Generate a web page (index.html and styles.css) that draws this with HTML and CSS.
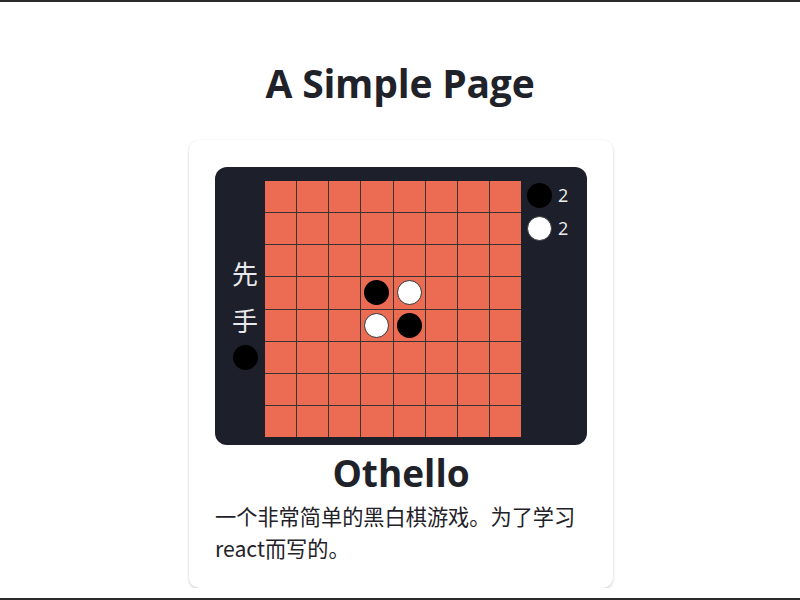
FILE: index.html
```html
<!DOCTYPE html>
<html lang="zh">
<head>
<meta charset="utf-8">
<title>A Simple Page</title>
<link rel="stylesheet" href="styles.css">
</head>
<body>
<div class="frame-bottom"></div>
<main class="page">
  <h1 class="page-title">A Simple Page</h1>
  <section class="card">
    <div class="board-panel">
      <div class="turn">
        <div class="turn-char">先</div>
        <div class="turn-char">手</div>
        <div class="stone black turn-stone"></div>
      </div>
      <div class="grid" id="grid"></div>
      <div class="scores">
        <div class="score"><div class="stone black"></div><span class="score-num">2</span></div>
        <div class="score"><div class="stone white"></div><span class="score-num">2</span></div>
      </div>
    </div>
    <h2 class="card-title">Othello</h2>
    <p class="card-desc">一个非常简单的黑白棋游戏。为了学习react而写的。</p>
  </section>
</main>
<script src="app.js"></script>
</body>
</html>
```
FILE: app.js
```js
(function () {
  var grid = document.getElementById('grid');
  var init = { '3,3': 'black', '3,4': 'white', '4,3': 'white', '4,4': 'black' };
  for (var r = 0; r < 8; r++) {
    for (var c = 0; c < 8; c++) {
      var cell = document.createElement('div');
      cell.className = 'cell';
      var k = r + ',' + c;
      if (init[k]) {
        var s = document.createElement('div');
        s.className = 'stone ' + init[k];
        cell.appendChild(s);
      }
      grid.appendChild(cell);
    }
  }
})();
```
FILE: styles.css
```css
html {
  border-top: 2px solid #2b2b2b;
}
body {
  margin: 0;
  background: #fff;
  color: #1f2229;
  font-family: "Open Sans", "Noto Sans CJK SC", sans-serif;
}
.frame-bottom {
  position: fixed;
  left: 0;
  right: 0;
  bottom: 0;
  height: 2px;
  background: #2b2b2b;
  z-index: 10;
}
.page {
  display: flex;
  flex-direction: column;
  align-items: center;
}
.page-title {
  margin: 54px 0 0;
  height: 84px;
  line-height: 54px;
  font-size: 39px;
  font-weight: 700;
  letter-spacing: -0.2px;
}
.card {
  width: 424px;
  box-sizing: border-box;
  padding: 27px 26px 24px;
  margin-left: 2px;
  border-radius: 10px;
  background: #fff;
  box-shadow: 0 1px 3px rgba(0, 0, 0, 0.16), 0 1px 2px rgba(0, 0, 0, 0.08);
}
.board-panel {
  display: flex;
  background: #1d202a;
  border-radius: 12px;
  padding: 14px 0 8px;
}
.turn {
  width: 50px;
  box-sizing: border-box;
  padding-left: 10px;
  display: flex;
  flex-direction: column;
  align-items: center;
  justify-content: center;
  color: #e8e9ec;
}
.turn-char {
  height: 47px;
  line-height: 47px;
  font-size: 26px;
  font-family: "Noto Sans CJK SC", sans-serif;
}
.turn-stone {
  margin-top: 2px;
}
.grid {
  width: 256px;
  height: 256px;
  display: grid;
  grid-template-columns: repeat(8, 1fr);
  grid-template-rows: repeat(8, 1fr);
  gap: 1px;
  background: #3a3235;
}
.cell {
  background: #ec6c53;
  display: flex;
  align-items: center;
  justify-content: center;
}
.stone {
  width: 25px;
  height: 25px;
  border-radius: 50%;
  box-sizing: border-box;
}
.stone.black {
  background: #000;
}
.stone.white {
  background: #fff;
  border: 1px solid #333;
}
.scores {
  flex: 1;
  display: flex;
  flex-direction: column;
  gap: 8px;
  padding: 2px 0 0 6px;
}
.score {
  display: flex;
  align-items: center;
  gap: 6px;
  height: 25px;
}
.score-num {
  color: #eceef1;
  font-size: 18px;
  line-height: 25px;
}
.card-title {
  margin: 0;
  height: 55px;
  line-height: 55px;
  text-align: center;
  font-size: 37px;
  font-weight: 700;
}
.card-desc {
  margin: 0;
  font-size: 21.2px;
  line-height: 32px;
  font-family: "Noto Sans CJK SC", sans-serif;
}
```
